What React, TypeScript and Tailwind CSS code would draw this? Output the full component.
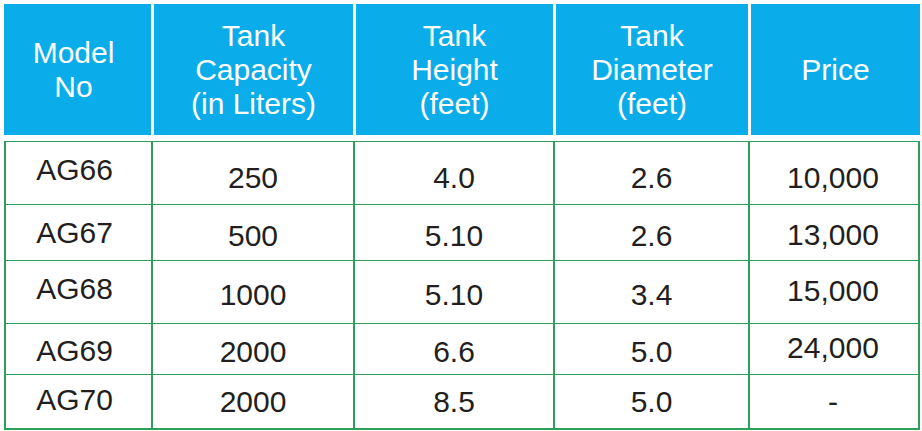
const rows = [
  { model: "AG66", cap: "250", height: "4.0", dia: "2.6", price: "10,000", h: "h-[63px] border-b", m: "pb-[6px]", d: "pt-[10px]", p: "pt-[10px]" },
  { model: "AG67", cap: "500", height: "5.10", dia: "2.6", price: "13,000", h: "h-[56px] border-b", m: "", d: "pt-[6px]", p: "pt-[4px]" },
  { model: "AG68", cap: "1000", height: "5.10", dia: "3.4", price: "15,000", h: "h-[63px] border-b", m: "pb-[6px]", d: "pt-[6px]", p: "pb-[2px]" },
  { model: "AG69", cap: "2000", height: "6.6", dia: "5.0", price: "24,000", h: "h-[51px] border-b", m: "pt-[4px]", d: "pt-[6px]", p: "pb-[2px]" },
  { model: "AG70", cap: "2000", height: "8.5", dia: "5.0", price: "-", h: "h-[53px]", m: "pb-[4px]", d: "", p: "" },
]

const headCols = "grid grid-cols-[147px_202px_200px_195px_172px]"
const bodyCols = "grid grid-cols-[145px_202px_200px_195px_170px]"

export default function App() {
  return (
    <div className="min-h-screen bg-white pl-[4px] pt-[4px] font-['Liberation_Sans',Arial,sans-serif]">
      <div className="w-[916px]">
        {/* header */}
        <div className={`${headCols} h-[131px] bg-[#0aade9] text-[30px] leading-[34px] text-white`}>
          <div className="flex items-center justify-center pr-2 text-center">Model<br />No</div>
          <div className="flex items-center justify-center border-l-[3px] border-white text-center">Tank<br />Capacity<br />(in Liters)</div>
          <div className="flex items-center justify-center border-l-[3px] border-white text-center">Tank<br />Height<br />(feet)</div>
          <div className="flex items-center justify-center border-l-[3px] border-white text-center">Tank<br />Diameter<br />(feet)</div>
          <div className="flex items-center justify-center border-l-[3px] border-white text-center">Price</div>
        </div>

        {/* body */}
        <div className="mt-[6px] border-x-2 border-t border-b-2 border-[#2e9f5b] text-[30px] leading-none text-[#231f20]">
          {rows.map((r) => (
            <div key={r.model} className={`${bodyCols} ${r.h} border-[#2e9f5b]`}>
              <div className={`flex items-center justify-center pr-[8px] ${r.m}`}>{r.model}</div>
              <div className={`flex items-center justify-center border-l-2 border-[#2e9f5b] ${r.d}`}>{r.cap}</div>
              <div className={`flex items-center justify-center border-l-2 border-[#2e9f5b] ${r.d}`}>{r.height}</div>
              <div className={`flex items-center justify-center border-l-2 border-[#2e9f5b] ${r.d}`}>{r.dia}</div>
              <div className={`flex items-center justify-center border-l-2 border-[#2e9f5b] pr-[2px] ${r.p}`}>{r.price}</div>
            </div>
          ))}
        </div>
      </div>
    </div>
  )
}
